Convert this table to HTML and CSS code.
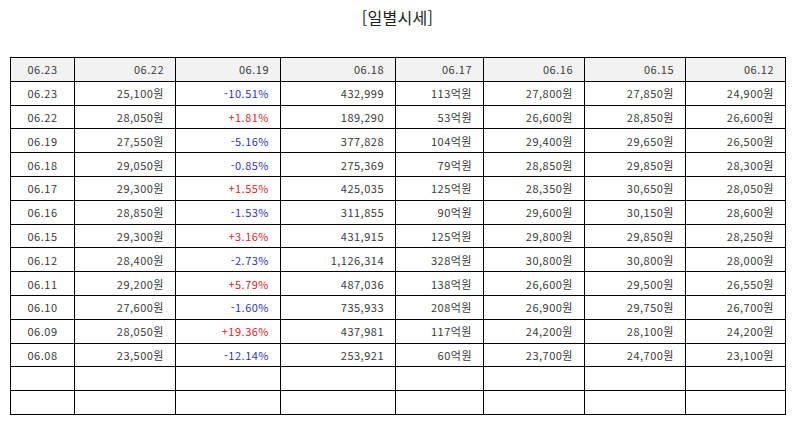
FILE: index.html
```html
<!DOCTYPE html>
<html lang="ko">
<head>
<meta charset="utf-8">
<link rel="stylesheet" href="styles.css">
</head>
<body>
<h2 class="title">[일별시세]</h2>
<table class="quote">
<colgroup>
<col class="c1"><col class="c2"><col class="c3"><col class="c4"><col class="c5"><col class="c6"><col class="c7"><col class="c8">
</colgroup>
<thead>
<tr><th class="date">06.23</th><th>06.22</th><th>06.19</th><th>06.18</th><th>06.17</th><th>06.16</th><th>06.15</th><th>06.12</th></tr>
</thead>
<tbody>
<tr><td class="date">06.23</td><td>25,100원</td><td class="down">-10.51%</td><td>432,999</td><td>113억원</td><td>27,800원</td><td>27,850원</td><td>24,900원</td></tr>
<tr><td class="date">06.22</td><td>28,050원</td><td class="up">+1.81%</td><td>189,290</td><td>53억원</td><td>26,600원</td><td>28,850원</td><td>26,600원</td></tr>
<tr><td class="date">06.19</td><td>27,550원</td><td class="down">-5.16%</td><td>377,828</td><td>104억원</td><td>29,400원</td><td>29,650원</td><td>26,500원</td></tr>
<tr><td class="date">06.18</td><td>29,050원</td><td class="down">-0.85%</td><td>275,369</td><td>79억원</td><td>28,850원</td><td>29,850원</td><td>28,300원</td></tr>
<tr><td class="date">06.17</td><td>29,300원</td><td class="up">+1.55%</td><td>425,035</td><td>125억원</td><td>28,350원</td><td>30,650원</td><td>28,050원</td></tr>
<tr><td class="date">06.16</td><td>28,850원</td><td class="down">-1.53%</td><td>311,855</td><td>90억원</td><td>29,600원</td><td>30,150원</td><td>28,600원</td></tr>
<tr><td class="date">06.15</td><td>29,300원</td><td class="up">+3.16%</td><td>431,915</td><td>125억원</td><td>29,800원</td><td>29,850원</td><td>28,250원</td></tr>
<tr><td class="date">06.12</td><td>28,400원</td><td class="down">-2.73%</td><td>1,126,314</td><td>328억원</td><td>30,800원</td><td>30,800원</td><td>28,000원</td></tr>
<tr><td class="date">06.11</td><td>29,200원</td><td class="up">+5.79%</td><td>487,036</td><td>138억원</td><td>26,600원</td><td>29,500원</td><td>26,550원</td></tr>
<tr><td class="date">06.10</td><td>27,600원</td><td class="down">-1.60%</td><td>735,933</td><td>208억원</td><td>26,900원</td><td>29,750원</td><td>26,700원</td></tr>
<tr><td class="date">06.09</td><td>28,050원</td><td class="up">+19.36%</td><td>437,981</td><td>117억원</td><td>24,200원</td><td>28,100원</td><td>24,200원</td></tr>
<tr><td class="date">06.08</td><td>23,500원</td><td class="down">-12.14%</td><td>253,921</td><td>60억원</td><td>23,700원</td><td>24,700원</td><td>23,100원</td></tr>
<tr><td class="date"></td><td></td><td></td><td></td><td></td><td></td><td></td><td></td></tr>
<tr><td class="date"></td><td></td><td></td><td></td><td></td><td></td><td></td><td></td></tr>
</tbody>
</table>
</body>
</html>
```
FILE: styles.css
```css
html, body {
  margin: 0;
  padding: 0;
  background: #ffffff;
}
body {
  padding: 0 9px 0 10px;
  font-family: "Noto Sans CJK KR", "Noto Sans", sans-serif;
  color: #3a3a3a;
}
.title {
  margin: 0;
  height: 57px;
  padding-top: 6px;
  box-sizing: border-box;
  text-align: center;
  font-size: 16px;
  font-weight: normal;
  line-height: 22px;
  color: #222222;
  letter-spacing: 0.3px;
}
.quote {
  width: 775px;
  border-collapse: collapse;
  table-layout: fixed;
  font-size: 11px;
  letter-spacing: 0.5px;
}
.c1 { width: 64px; }
.c2 { width: 101px; }
.c3 { width: 105px; }
.c4 { width: 115px; }
.c5 { width: 88px; }
.c6 { width: 101px; }
.c7 { width: 101px; }
.c8 { width: 100px; }
.quote th, .quote td {
  border: 1px solid #000000;
  height: 22.8px;
  padding: 0 11px 0 4px;
  text-align: right;
  font-weight: normal;
  line-height: 14px;
  white-space: nowrap;
}
.quote th {
  background: #f2f2f2;
}
.quote .date {
  text-align: center;
  padding: 0;
}
.quote .down { color: #3333cc; }
.quote .up { color: #e0262c; }
```
